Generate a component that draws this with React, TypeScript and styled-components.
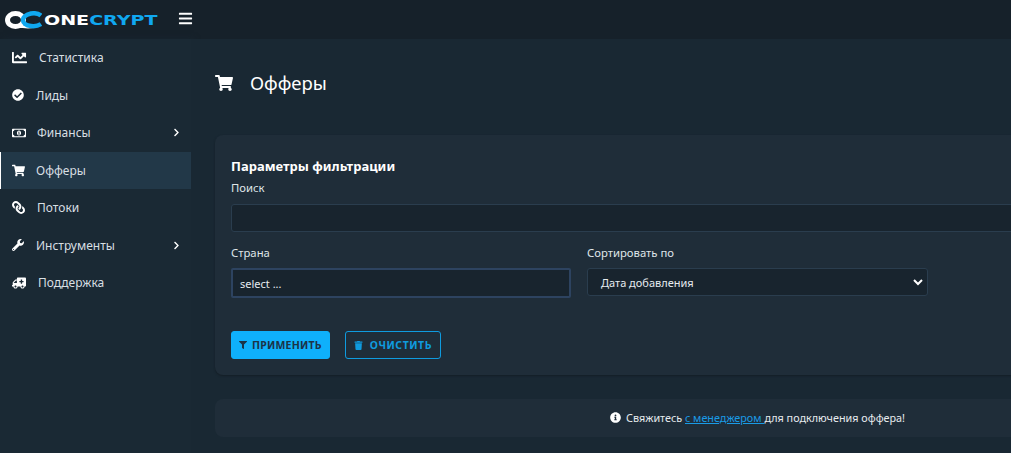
import { createGlobalStyle } from "styled-components";
import styled from "styled-components";
import {
  FaBars,
  FaChartLine,
  FaCheckCircle,
  FaChevronRight,
  FaFilter,
  FaInfoCircle,
  FaLink,
  FaRegMoneyBillAlt,
  FaShoppingCart,
  FaTrash,
  FaAmbulance,
  FaWrench,
} from "react-icons/fa";

const GlobalStyle = createGlobalStyle`
  html, body {
    margin: 0;
    padding: 0;
    height: 100%;
    overflow: hidden;
    background: #192833;
  }
  * {
    box-sizing: border-box;
  }
`;

const Page = styled.div`
  width: 1011px;
  height: 453px;
  overflow: hidden;
  display: flex;
  flex-direction: column;
  font-family: "Noto Sans", "Open Sans", sans-serif;
  color: #e6ebee;
`;

const TopBar = styled.div`
  height: 39px;
  flex: none;
  background: #16212a;
  display: flex;
  align-items: center;
  padding-left: 5px;
  color: #fff;
`;

const Brand = styled.div`
  display: flex;
  align-items: center;
  width: 173px;
  gap: 2px;
`;

const BrandText = styled.div`
  font-family: "DejaVu Sans", sans-serif;
  font-size: 14px;
  font-weight: 700;
  transform: scaleX(1.36);
  transform-origin: left center;
  white-space: nowrap;
`;

const BrandOne = styled.span`
  color: #fff;
`;

const BrandCrypt = styled.span`
  color: #10a8f0;
`;

const MenuToggle = styled.div`
  display: flex;
  margin-bottom: 3px;
`;

const Body = styled.div`
  flex: 1;
  display: flex;
  min-height: 0;
`;

const Sidebar = styled.nav`
  width: 191px;
  flex: none;
  background: #1a2934;
  box-shadow: 3px 0 6px #182530;
`;

const MenuItem = styled.div<{ $active?: boolean; $gap: number }>`
  height: 37.5px;
  display: flex;
  align-items: center;
  padding-left: ${(props) => (props.$active ? "11px" : "12px")};
  padding-right: 10px;
  gap: ${(props) => props.$gap}px;
  font-size: 12px;
  color: #d8dfe3;
  background: ${(props) => (props.$active ? "#223848" : "transparent")};
  border-left: ${(props) => (props.$active ? "1px solid #fff" : "none")};
  svg {
    flex: none;
    color: #fff;
  }
`;

const MenuLabel = styled.span`
  flex: 1;
`;

const FlippedIcon = styled.span`
  display: flex;
  transform: scaleX(-1);
`;

const Content = styled.main`
  flex: 1;
  min-width: 0;
  background: #192833;
`;

const TitleBar = styled.div`
  height: 69px;
  display: flex;
  align-items: center;
  gap: 17px;
  padding: 18px 0 0 24px;
  font-size: 18.5px;
  color: #fff;
`;

const Card = styled.section`
  margin: 27px 0 0 24px;
  width: 820px;
  height: 240px;
  background: #1f2d39;
  border-radius: 8px 0 0 8px;
  padding: 22px 0 0 16px;
  box-shadow: 0 1px 2px #141e26;
`;

const CardTitle = styled.div`
  font-size: 13px;
  font-weight: 700;
  color: #fff;
  line-height: 18px;
  margin-bottom: 5px;
`;

const FieldLabel = styled.div`
  font-size: 11.3px;
  line-height: 15px;
  color: #dfe5e8;
`;

const SearchInput = styled.input`
  display: block;
  width: 790px;
  height: 28px;
  margin-top: 9px;
  background: #18242e;
  border: 1px solid #2a3d4e;
  border-radius: 3px;
  outline: none;
`;

const FieldRow = styled.div`
  display: flex;
  gap: 16px;
  margin-top: 13px;
`;

const Field = styled.div<{ $width: number }>`
  width: ${(props) => props.$width}px;
`;

const SelectBox = styled.div`
  height: 30px;
  margin-top: 8px;
  background: #18242e;
  border: 2px solid #2d4360;
  border-radius: 2px;
  display: flex;
  align-items: center;
  padding-left: 7px;
  font-size: 11px;
  color: #e6ebee;
`;

const SortBox = styled.div`
  height: 28px;
  margin-top: 8px;
  background: #18242e;
  border: 1px solid #2a3d4e;
  border-radius: 3px;
  display: flex;
  align-items: center;
  justify-content: space-between;
  padding: 0 4px 0 13px;
  font-size: 11px;
  color: #e6ebee;
`;

const Actions = styled.div`
  display: flex;
  gap: 15px;
  margin-top: 33px;
`;

const Button = styled.div<{ $filled?: boolean }>`
  height: 28px;
  display: flex;
  align-items: center;
  gap: ${(props) => (props.$filled ? "5px" : "7px")};
  padding: 0 ${(props) => (props.$filled ? "7px" : "8px")};
  border-radius: 3px;
  font-size: 10.5px;
  font-weight: 700;
  letter-spacing: ${(props) => (props.$filled ? "0.2px" : "0.55px")};
  background: ${(props) => (props.$filled ? "#0fb0fb" : "transparent")};
  color: ${(props) => (props.$filled ? "#1b3347" : "#0f9bdf")};
  border: 1px solid ${(props) => (props.$filled ? "#0fb0fb" : "#0f9bdf")};
`;

const Notice = styled.div`
  margin: 24px 0 0 24px;
  width: 1085px;
  height: 38px;
  padding-bottom: 1px;
  background: #1f2d39;
  border-radius: 8px 0 0 8px;
  display: flex;
  align-items: center;
  justify-content: center;
  gap: 5px;
  font-size: 10.8px;
  color: #e6ebee;
  svg {
    color: #fff;
  }
`;

const ManagerLink = styled.a`
  color: #1a9be6;
  text-decoration: underline;
`;

function Logo() {
  return (
    <svg width="37" height="18" viewBox="0 0 37 18">
      <ellipse cx="10.5" cy="9" rx="8" ry="6.5" fill="none" stroke="#fff" strokeWidth="5" />
      <path d="M14 15.5 C20 16 24 17 28 15.5" fill="none" stroke="#fff" strokeWidth="2.5" />
      <path d="M36 4.5 C33 2 29 2 26 2.5 C20 4 18 7 18 9 C18 12 21 14.5 26 15 C30 15.5 33 15 36 13" fill="none" stroke="#10a8f0" strokeWidth="4.5" />
    </svg>
  );
}

const menu = [
  { label: "Статистика", icon: <FaChartLine size={15} />, gap: 12 },
  { label: "Лиды", icon: <FaCheckCircle size={12} />, gap: 12 },
  { label: "Финансы", icon: <FaRegMoneyBillAlt size={14} />, gap: 11, arrow: true },
  { label: "Офферы", icon: <FaShoppingCart size={13} />, gap: 11, active: true },
  { label: "Потоки", icon: <FlippedIcon><FaLink size={13} /></FlippedIcon>, gap: 12 },
  { label: "Инструменты", icon: <FaWrench size={12} />, gap: 12, arrow: true },
  { label: "Поддержка", icon: <FlippedIcon><FaAmbulance size={14} /></FlippedIcon>, gap: 12 },
];

export default function App() {
  return (
    <Page>
      <GlobalStyle />
      <TopBar>
        <Brand>
          <Logo />
          <BrandText>
            <BrandOne>ONE</BrandOne>
            <BrandCrypt>CRYPT</BrandCrypt>
          </BrandText>
        </Brand>
        <MenuToggle>
          <FaBars size={15} />
        </MenuToggle>
      </TopBar>
      <Body>
        <Sidebar>
          {menu.map((item) => (
            <MenuItem key={item.label} $active={item.active} $gap={item.gap}>
              {item.icon}
              <MenuLabel>{item.label}</MenuLabel>
              {item.arrow && <FaChevronRight size={9} />}
            </MenuItem>
          ))}
        </Sidebar>
        <Content>
          <TitleBar>
            <FaShoppingCart size={18} />
            Офферы
          </TitleBar>
          <Card>
            <CardTitle>Параметры фильтрации</CardTitle>
            <FieldLabel>Поиск</FieldLabel>
            <SearchInput />
            <FieldRow>
              <Field $width={340}>
                <FieldLabel>Страна</FieldLabel>
                <SelectBox>select ...</SelectBox>
              </Field>
              <Field $width={341}>
                <FieldLabel>Сортировать по</FieldLabel>
                <SortBox>
                  Дата добавления
                  <svg width="10" height="8" viewBox="0 0 10 8">
                    <path d="M1 2 L5 6 L9 2" fill="none" stroke="#fff" strokeWidth="2" />
                  </svg>
                </SortBox>
              </Field>
            </FieldRow>
            <Actions>
              <Button $filled>
                <FaFilter size={8} />
                ПРИМЕНИТЬ
              </Button>
              <Button>
                <FaTrash size={9} />
                ОЧИСТИТЬ
              </Button>
            </Actions>
          </Card>
          <Notice>
            <FaInfoCircle size={11} />
            <span>
              Свяжитесь <ManagerLink>с менеджером </ManagerLink>для подключения оффера!
            </span>
          </Notice>
        </Content>
      </Body>
    </Page>
  );
}
